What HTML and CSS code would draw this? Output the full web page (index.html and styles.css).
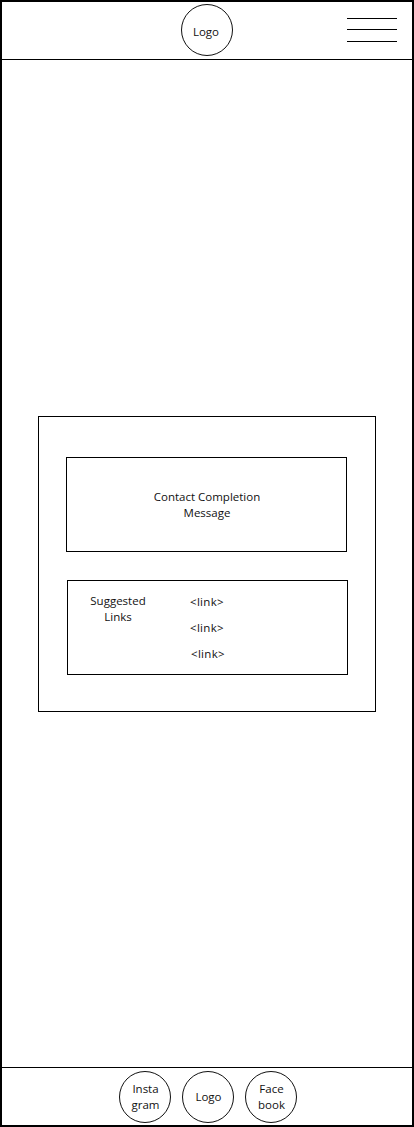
FILE: index.html
```html
<!DOCTYPE html>
<html lang="en">
<head>
<meta charset="utf-8">
<title>Contact Completion</title>
<link rel="stylesheet" href="styles.css">
</head>
<body>
<div class="page">
  <header class="header">
    <div class="circle"><span class="logo-top">Logo</span></div>
    <nav class="menu" aria-label="Menu">
      <svg width="50" height="24" viewBox="0 0 50 24" shape-rendering="crispEdges"><path d="M0 .5H50M0 11.5H50M0 23.5H50" stroke="#000" fill="none"/></svg>
    </nav>
  </header>
  <main class="main">
    <section class="card">
      <div class="box message"><p>Contact Completion<br>Message</p></div>
      <div class="box links">
        <p class="links-title">Suggested<br>Links</p>
        <ul class="link-list">
          <li>&lt;link&gt;</li>
          <li>&lt;link&gt;</li>
          <li class="last">&lt;link&gt;</li>
        </ul>
      </div>
    </section>
  </main>
  <footer class="footer">
    <div class="circle"><span>Insta<br>gram</span></div>
    <div class="circle"><span>Logo</span></div>
    <div class="circle"><span>Face<br>book</span></div>
  </footer>
</div>
</body>
</html>
```
FILE: styles.css
```css
* { box-sizing: border-box; margin: 0; padding: 0; }
body {
  background: #fff;
  color: #111;
  font-family: "Open Sans", "Noto Sans", sans-serif;
  font-size: 11.5px;
  line-height: 16px;
}
.page {
  display: flex;
  flex-direction: column;
  height: 1127px;
  border: 2px solid #000;
}
.header {
  display: grid;
  grid-template-columns: 1fr 52px 1fr;
  height: 58px;
  padding: 2px 15px 0 14px;
  border-bottom: 1px solid #000;
}
.header .circle { grid-column: 2; }
.menu { justify-self: end; padding-top: 14px; }
.menu svg { display: block; }
.circle {
  display: flex;
  align-items: center;
  justify-content: center;
  width: 52px;
  height: 52px;
  border: 1px solid #111;
  border-radius: 50%;
  text-align: center;
}
.logo-top { padding-top: 3px; padding-right: 1px; }
.footer .circle { padding-left: 1px; }
.main { flex: 1; padding: 356px 36px 0; }
.card {
  width: 338px;
  height: 296px;
  padding: 40px 27px 0;
  border: 1px solid #000;
}
.box { width: 281px; height: 95px; border: 1px solid #000; }
.message {
  display: flex;
  align-items: center;
  justify-content: center;
  padding: 1px 0 0 1px;
  text-align: center;
}
.links { display: flex; margin: 28px 0 0 1px; padding-top: 12px; }
.links-title { width: 100px; text-align: center; }
.link-list {
  display: flex;
  flex-direction: column;
  gap: 10px;
  margin-left: 22px;
  padding-top: 1px;
  list-style: none;
  letter-spacing: 0.3px;
}
.link-list .last { padding-left: 1px; }
.footer {
  display: flex;
  gap: 11px;
  height: 58px;
  padding: 3px 0 0 117px;
  border-top: 1px solid #000;
}
```
